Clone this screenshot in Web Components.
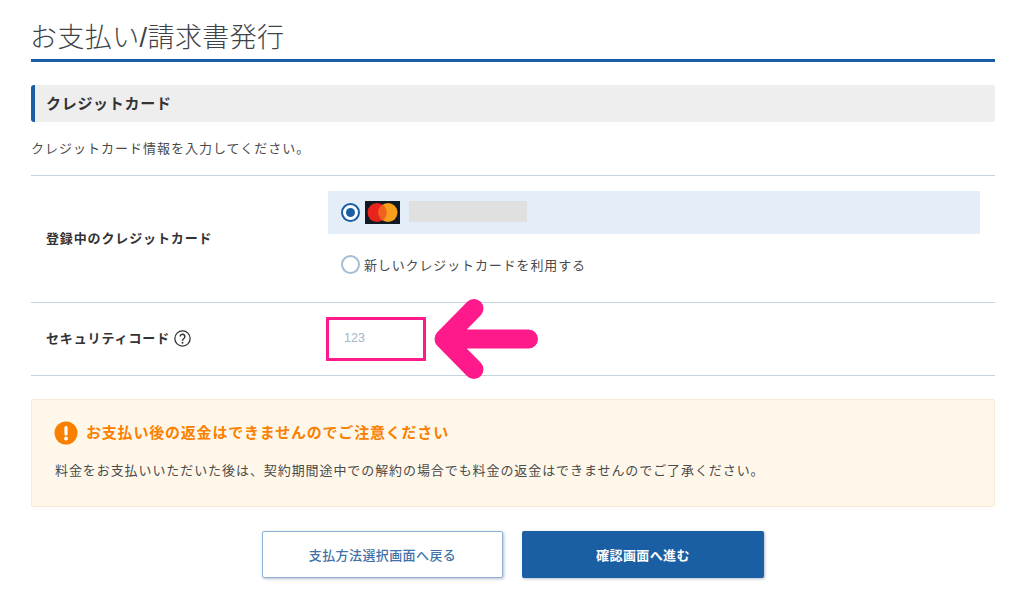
<!DOCTYPE html>
<html lang="ja"><head><meta charset="utf-8"><title>お支払い</title>
<style>
html,body{margin:0;background:#fff}
body{font-family:"Liberation Sans","Noto Sans CJK JP",sans-serif;color:#333;width:1024px;height:598px;overflow:hidden}
</style></head><body>
<pay-page>
  <page-title>お支払い/請求書発行</page-title>
  <section-bar>クレジットカード</section-bar>
  <p slot="intro">クレジットカード情報を入力してください。</p>
  <form-row slot="row" h="127">
    <span slot="label">登録中のクレジットカード</span>
    <card-choice></card-choice>
  </form-row>
  <form-row slot="row" h="73">
    <span slot="label">セキュリティコード<help-icon></help-icon></span>
    <code-field></code-field>
  </form-row>
  <warn-box slot="warn" heading="お支払い後の返金はできませんのでご注意ください">料金をお支払いいただいた後は、契約期間途中での解約の場合でも料金の返金はできませんのでご了承ください。</warn-box>
  <pay-button slot="btn" kind="ghost">支払方法選択画面へ戻る</pay-button>
  <pay-button slot="btn" kind="solid">確認画面へ進む</pay-button>
</pay-page>
<script>
function def(name,html){customElements.define(name,class extends HTMLElement{connectedCallback(){if(this.shadowRoot)return;const r=this.attachShadow({mode:"open"});r.innerHTML=typeof html==="function"?html(this):html;}})}
def("pay-page",`<style>
:host{display:block;position:relative;padding:0 29px 0 31px;width:964px;height:598px}
.intro{height:54px;padding-bottom:3px;display:flex;align-items:center;font-size:13px;letter-spacing:1px;color:#4a4a4a;border-bottom:1px solid #c5d2e0;box-sizing:border-box}
::slotted(p){margin:0}
.btns{display:flex;justify-content:center;gap:19px;margin-top:24px}
.warn{display:block;margin-top:23px}
svg{position:absolute;left:430px;top:295px;overflow:visible}
</style>
<slot></slot><div class="intro"><slot name="intro"></slot></div><slot name="row"></slot>
<div class="warn"><slot name="warn"></slot></div><div class="btns"><slot name="btn"></slot></div>
<svg width="115" height="90" viewBox="0 0 115 90" fill="none" stroke="#ff1a8c" stroke-width="19" stroke-linecap="round" stroke-linejoin="round"><path d="M98.500 44H15M44 13.500 14 44l30 30.500"/></svg>`);
def("page-title",`<style>:host{display:block;height:62px;box-sizing:border-box;border-bottom:3px solid #1a5ea3}
div{font-size:27px;line-height:36px;padding-top:20px;letter-spacing:.4px;color:#3e4347;font-weight:300;margin-left:-1px}</style><div><slot></slot></div>`);
def("section-bar",`<style>:host{display:flex;align-items:center;margin-top:23px;height:37px;padding-bottom:2px;background:#eee;border-left:4px solid #1a5ea3;border-radius:3px;padding-left:11px;box-sizing:border-box;font-size:15px;font-weight:700;letter-spacing:.7px;color:#333}</style><slot></slot>`);
def("form-row",t=>`<style>:host{display:grid;grid-template-columns:297px 1fr;align-items:center;height:${t.getAttribute("h")}px;box-sizing:border-box;border-bottom:1px solid #c5d2e0}
.l{padding:0 0 4px 15px;font-size:13px;font-weight:700;letter-spacing:.87px;color:#333}</style><div class="l"><slot name="label"></slot></div><div class="c"><slot></slot></div>`);
def("help-icon",`<style>:host{display:inline-block;width:17px;height:17px;margin-left:4px;vertical-align:-4px}svg{display:block}</style>
<svg width="17" height="17" viewBox="0 0 16 16" fill="none" stroke="#333" stroke-width="1.2"><circle cx="8" cy="8" r="7.2"/><path d="M5.800 6.200a2.200 2.200 0 1 1 3.500 1.800c-.9.600-1.300 1-1.300 2" stroke-width="1.400"/><circle cx="8" cy="12" r=".9" fill="#333" stroke="none"/></svg>`);
def("card-choice",`<style>:host{display:block;margin:-13px 15px 0 0;font-size:13px;letter-spacing:.87px;color:#4a4a4a}
.sel{display:flex;align-items:center;height:43px;background:#e4eef8;padding-left:13px;box-sizing:border-box}
.new{display:flex;align-items:center;height:20px;margin-top:20px;padding-left:13px}
.r{width:19px;height:19px;box-sizing:border-box;border-radius:50%;border:2px solid #a4bcd4;background:#fff;margin-right:4px;flex:none}
.on{border-color:#1a5ea3;position:relative;margin-right:5px}
.on::after{content:"";position:absolute;left:3px;top:3px;width:9px;height:9px;border-radius:50%;background:#1a5ea3}
.card{display:block;flex:none}.mask{width:118px;height:21px;background:#e0e0e0;margin:-2px 0 0 9px}</style>
<div class="sel"><span class="r on"></span><svg class="card" width="35" height="23" viewBox="0 0 35 23"><rect width="35" height="23" fill="#111a22"/><circle cx="12" cy="11.500" r="9.500" fill="#e8231c"/><circle cx="23" cy="11.500" r="9.500" fill="#f79e1b"/><path d="M17.500 3.600a9.500 9.500 0 0 1 0 15.800 9.500 9.500 0 0 1 0-15.800z" fill="#f2601f"/></svg><span class="mask"></span></div>
<div class="new"><span class="r"></span><span>新しいクレジットカードを利用する</span></div>`);
def("code-field",`<style>:host{display:block;width:100px;height:44px;margin-left:-2px;box-sizing:border-box;border:3px solid #ff1a8c;background:#fff;font-size:12.500px;color:#a5b5c8;line-height:37px;padding-left:15px}</style>123`);
def("warn-box",t=>`<style>:host{display:block;height:108px;box-sizing:border-box;background:#fff8ea;border:1px solid #f8ecd9;padding:20px 22px 0;border-radius:2px}
.h{display:flex;align-items:center;gap:8px;font-size:15px;font-weight:700;letter-spacing:.8px;color:#f98000;height:26px}
.h span{margin-top:-4px}
.b{margin:15px 0 0 1px;font-size:13px;letter-spacing:.92px;color:#4a4a4a;line-height:20px}svg{display:block;flex:none}</style>
<div class="h"><svg width="24" height="24" viewBox="0 0 24 24"><circle cx="12" cy="12" r="11.500" fill="#f98000"/><rect x="10.400" y="5" width="3.200" height="9.500" rx="1.500" fill="#fff"/><circle cx="12" cy="17.500" r="1.900" fill="#fff"/></svg><span>${t.getAttribute("heading")}</span></div><div class="b"><slot></slot></div>`);
def("pay-button",t=>{const g=t.getAttribute("kind")==="ghost";return `<style>:host{display:flex;align-items:center;justify-content:center;box-sizing:border-box;width:${g?241:242}px;height:47px;border-radius:2px;font-size:13px;font-weight:${g?500:700};letter-spacing:.4px;box-shadow:1px 1px 3px rgba(40,70,110,.35);background:${g?"#fff":"#1a5ea3"};color:${g?"#3f72a8":"#fff"};border:${g?"1.500px solid #8fb0d6":"none"}}</style><slot></slot>`});
</script></body></html>
